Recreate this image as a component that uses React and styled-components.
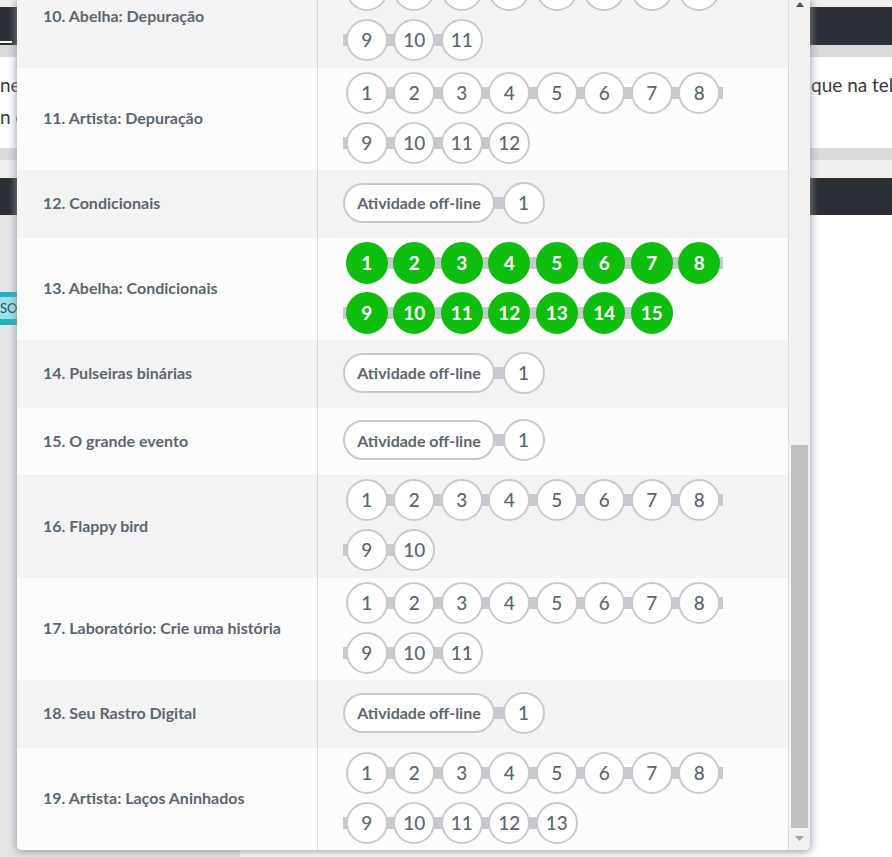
import React from 'react';
import styled, { createGlobalStyle } from 'styled-components';

const GlobalStyle = createGlobalStyle`
  * { box-sizing: border-box; }
  html, body { margin: 0; padding: 0; }
  body {
    font-family: Lato, "Noto Sans", "DejaVu Sans", sans-serif;
    background: #fff;
    overflow: hidden;
  }
`;

const lessons = [
  { n: 10, name: 'Abelha: Depuração', levels: 11 },
  { n: 11, name: 'Artista: Depuração', levels: 12 },
  { n: 12, name: 'Condicionais', levels: 1, offline: true },
  { n: 13, name: 'Abelha: Condicionais', levels: 15, done: true },
  { n: 14, name: 'Pulseiras binárias', levels: 1, offline: true },
  { n: 15, name: 'O grande evento', levels: 1, offline: true },
  { n: 16, name: 'Flappy bird', levels: 10 },
  { n: 17, name: 'Laboratório: Crie uma história', levels: 11 },
  { n: 18, name: 'Seu Rastro Digital', levels: 1, offline: true },
  { n: 19, name: 'Artista: Laços Aninhados', levels: 13 },
];

// ---- page behind the dialog ----

const Page = styled.div`
  min-height: 857px;
  display: flex;
  flex-direction: column;
  background: #efefef;
  padding-top: 7px;
`;

const DarkBar = styled.div`
  height: ${p => p.h}px;
  background: #2a2f36;
`;

const NavUnderline = styled.span`
  display: block;
  width: 12px;
  height: 2px;
  background: #fff;
  margin-top: 34px;
`;

const Band = styled.div`
  height: ${p => p.h}px;
  background: ${p => p.color};
`;

const Intro = styled.div`
  height: 91px;
  background: #fff;
  display: grid;
  grid-template-columns: 811px 1fr;
  padding-top: 12px;
  font-size: 19px;
  line-height: 32px;
  color: #3a3a3a;
  white-space: nowrap;
  overflow: hidden;
`;

const IntroCol = styled.div`
  overflow: hidden;
`;

const Main = styled.div`
  flex: 1;
  display: flex;
  background: #fff;
`;

const Sidebar = styled.div`
  width: 240px;
  background: #e6e6e6;
  padding-top: 77px;
`;

const SideButton = styled.div`
  width: 120px;
  height: 33px;
  background: #9fe2e9;
  border-top: 5px solid #1cb4c4;
  border-bottom: 6px solid #1cb4c4;
  color: #1e5058;
  font-size: 13px;
  line-height: 22px;
`;

// ---- dialog ----

const Modal = styled.div`
  position: fixed;
  left: 17px;
  top: 0;
  width: 793px;
  height: 850px;
  background: #fff;
  border-radius: 0 0 5px 5px;
  box-shadow: 0 1px 9px 1px rgba(140, 144, 150, 0.85);
  display: flex;
  overflow: hidden;
`;

const ListViewport = styled.div`
  flex: 1;
  display: flex;
  flex-direction: column;
  justify-content: flex-end;
  overflow: hidden;
`;

const Row = styled.div`
  display: grid;
  grid-template-columns: 301px 1fr;
  min-height: ${p => (p.tall ? 102.5 : 67.5)}px;
  background: ${p => (p.odd ? '#f3f3f3' : '#fcfcfc')};
  flex-shrink: 0;
`;

const LabelCell = styled.div`
  border-right: 1px solid #d9d9d9;
  padding: 0 16px 2px 26px;
  display: flex;
  align-items: center;
  font-size: 16px;
  font-weight: 700;
  color: #5b6770;
`;

const ProgressCell = styled.div`
  padding: 0 0 2.5px 25px;
  display: flex;
  align-items: center;
`;

const Levels = styled.div`
  width: 385px;
  display: flex;
  flex-wrap: wrap;
`;

const Step = styled.div`
  position: relative;
  display: flex;
  align-items: center;
  padding: ${p => (p.pill ? '4px 4.75px 4px 0' : '4px 2.75px')};
  &::before {
    content: '';
    position: absolute;
    top: 50%;
    height: 12px;
    margin-top: -6px;
    left: ${p => (p.first ? '50%' : '0')};
    right: ${p => (p.last ? '50%' : '0')};
    background: #c7cacd;
  }
`;

const Bubble = styled.div`
  position: relative;
  width: 42px;
  height: 42px;
  border-radius: 50%;
  border: 2px solid ${p => (p.done ? '#0ebe0e' : '#c7cacd')};
  background: ${p => (p.done ? '#0ebe0e' : '#fff')};
  color: ${p => (p.done ? '#fff' : '#5b6770')};
  font-size: 19px;
  font-weight: ${p => (p.done ? 700 : 500)};
  display: flex;
  align-items: center;
  justify-content: center;
  padding-bottom: 1px;
`;

const Pill = styled.div`
  position: relative;
  width: 152px;
  height: 40px;
  border-radius: 20px;
  border: 2px solid #c7cacd;
  background: #fff;
  color: #5b6770;
  font-size: 16px;
  font-weight: 700;
  display: flex;
  align-items: center;
  justify-content: center;
`;

const Track = styled.div`
  width: 22px;
  background: #f1f1f1;
  border-left: 1px solid #dcdcdc;
  display: flex;
  flex-direction: column;
`;

const ArrowButton = styled.div`
  height: ${p => p.h}px;
  display: flex;
  justify-content: center;
  align-items: flex-start;
  padding-top: ${p => p.pt}px;
`;

const ThumbArea = styled.div`
  flex: 1;
  display: flex;
  flex-direction: column;
  justify-content: flex-end;
  padding: 0 2px 2px 2px;
`;

const Thumb = styled.div`
  height: 383px;
  background: #c1c1c1;
`;

const LessonRow = ({ lesson, odd }) => {
  const steps = [];
  if (lesson.offline) steps.push({ pill: true });
  for (let i = 1; i <= lesson.levels; i++) steps.push({ num: i });
  return (
    <Row odd={odd} tall={lesson.levels > 8}>
      <LabelCell>{`${lesson.n}. ${lesson.name}`}</LabelCell>
      <ProgressCell>
        <Levels>
          {steps.map((s, i) => (
            <Step key={i} pill={s.pill} first={i === 0} last={i === steps.length - 1}>
              {s.pill
                ? <Pill>Atividade off-line</Pill>
                : <Bubble done={lesson.done}>{s.num}</Bubble>}
            </Step>
          ))}
        </Levels>
      </ProgressCell>
    </Row>
  );
};

const App = () => (
  <>
    <GlobalStyle />
    <Page>
      <DarkBar h={38}><NavUnderline /></DarkBar>
      <Band h={12} color="#dadada" />
      <Intro>
        <IntroCol>
          nesta etapa os alunos praticam depuração e condicionais antes de cli<br />
          n com a ajuda do professor, em cada nível do curso
        </IntroCol>
        <IntroCol>que na tela para continuar</IntroCol>
      </Intro>
      <Band h={12} color="#dadada" />
      <Band h={18} color="#efefef" />
      <DarkBar h={37} />
      <Main>
        <Sidebar>
          <SideButton>SO</SideButton>
        </Sidebar>
      </Main>
    </Page>

    <Modal>
      <ListViewport>
        {lessons.map((l, i) => (
          <LessonRow key={l.n} lesson={l} odd={i % 2 === 0} />
        ))}
      </ListViewport>
      <Track>
        <ArrowButton h={17} pt={2}>
          <svg width="8" height="5" viewBox="0 0 8 5"><polygon points="0,5 8,5 4,0" fill="#505050" /></svg>
        </ArrowButton>
        <ThumbArea><Thumb /></ThumbArea>
        <ArrowButton h={20} pt={6}>
          <svg width="9" height="5" viewBox="0 0 9 5"><polygon points="0,0 9,0 4.5,5" fill="#a3a3a3" /></svg>
        </ArrowButton>
      </Track>
    </Modal>
  </>
);

export default App;
